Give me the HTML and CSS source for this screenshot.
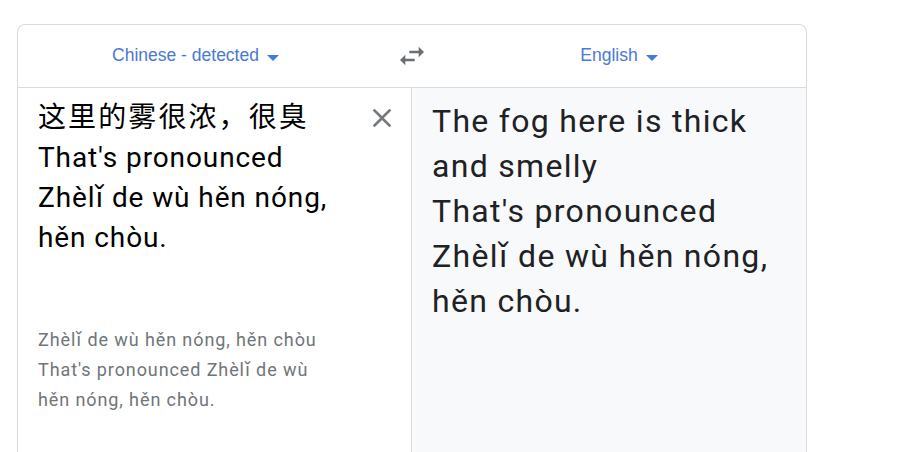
FILE: index.html
```html
<!DOCTYPE html>
<html lang="zh">
<head>
<meta charset="utf-8">
<title>Translate</title>
<link rel="stylesheet" href="styles.css">
</head>
<body>
<div class="card">
  <div class="header">
    <div class="lang lang-source">
      <span class="lang-name">Chinese - detected</span>
      <span class="caret"><svg width="12" height="6" viewBox="0 0 12 6"><path d="M0 0h12L6 6z" fill="#3e7be0"/></svg></span>
    </div>
    <div class="swap">
      <svg width="32" height="32" viewBox="0 0 24 24"><path d="M6.99 11L3 15l3.99 4v-3H14v-2H6.99v-3zM21 9l-3.99-4v3H10v2h7.01v3L21 9z" fill="#6b6e72"/></svg>
    </div>
    <div class="lang lang-target">
      <span class="lang-name">English</span>
      <span class="caret"><svg width="12" height="6" viewBox="0 0 12 6"><path d="M0 0h12L6 6z" fill="#3e7be0"/></svg></span>
    </div>
  </div>
  <div class="body">
    <div class="source">
      <div class="source-row">
        <div class="source-text"><span class="cjk">这里的雾很浓，很臭</span><br>That's pronounced Zhèlǐ de wù hěn nóng, hěn chòu.</div>
        <div class="clear">
          <svg width="32" height="32" viewBox="0 0 24 24"><path d="M19 6.41L17.59 5 12 10.59 6.41 5 5 6.41 10.59 12 5 17.59 6.41 19 12 13.41 17.59 19 19 17.59 13.41 12z" fill="#75787c"/></svg>
        </div>
      </div>
      <div class="translit">Zhèlǐ de wù hěn nóng, hěn chòu<br>That's pronounced Zhèlǐ de wù hěn nóng, hěn chòu.</div>
    </div>
    <div class="target">
      <div class="target-text">The fog here is thick and smelly<br>That's pronounced Zhèlǐ de wù hěn nóng, hěn chòu.</div>
    </div>
  </div>
</div>
</body>
</html>
```
FILE: styles.css
```css
html, body {
  margin: 0;
  padding: 0;
  background: #ffffff;
}
body {
  padding: 24px 0 0 17px;
  font-family: Roboto, "Noto Sans CJK SC", sans-serif;
}
.card {
  width: 790px;
  box-sizing: border-box;
  border: 1px solid #dadce0;
  border-bottom: none;
  border-radius: 8px 8px 0 0;
  height: 440px;
  display: flex;
  flex-direction: column;
}
.header {
  height: 62px;
  border-bottom: 1px solid #dadce0;
  display: grid;
  grid-template-columns: 1fr 64px 1fr;
  align-items: center;
}
.lang {
  display: flex;
  justify-content: center;
  align-items: center;
}
.lang-source {
  padding-right: 1px;
}
.lang-target {
  padding-right: 6px;
}
.lang-name {
  font-family: "Liberation Sans", Arial, sans-serif;
  font-size: 17.5px;
  color: #4a78d5;
  padding-bottom: 2px;
}
.caret {
  width: 24px;
  height: 24px;
  display: flex;
  align-items: center;
  justify-content: center;
  padding-top: 4px;
  box-sizing: border-box;
  margin-left: 2px;
}
.swap {
  display: flex;
  justify-content: center;
  align-items: center;
}
.swap svg, .clear svg { display: block; }
.body {
  flex: 1;
  display: flex;
}
.source {
  flex: 0 0 50%;
  box-sizing: border-box;
  background: #ffffff;
  border-right: 1px solid #dadce0;
  padding: 10px 0 0 20px;
}
.source-row {
  display: flex;
  align-items: flex-start;
}
.source-text {
  flex: 1;
  padding-right: 26px;
  font-size: 28px;
  line-height: 40px;
  letter-spacing: 0.9px;
  color: #000000;
  height: 227px;
}
.cjk {
  letter-spacing: 2.1px;
}
.clear {
  width: 32px;
  margin: 4px 13px 0 0;
}
.translit {
  width: 292px;
  font-size: 18px;
  line-height: 30px;
  letter-spacing: 0.9px;
  color: #70757a;
}
.target {
  flex: 0 0 50%;
  box-sizing: border-box;
  background: #f8f9fa;
  padding: 11px 20px 0 20px;
}
.target-text {
  font-size: 32px;
  line-height: 45px;
  letter-spacing: 1.3px;
  color: #202124;
}
```
